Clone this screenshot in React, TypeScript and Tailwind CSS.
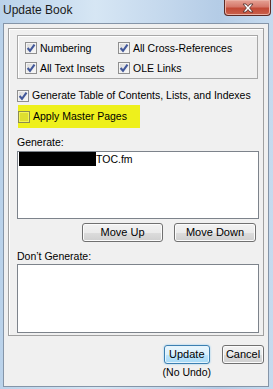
import React from "react"

function Check({ checked = false, tint = false }: { checked?: boolean; tint?: boolean }) {
  return (
    <span
      className={
        "w-[12px] h-[12px] shrink-0 border flex items-center justify-center " +
        (tint
          ? "border-[#8c8c50] bg-[#dede30] shadow-[inset_0_0_0_1px_#f4f45a]"
          : "border-[#8f8f8f] bg-[linear-gradient(135deg,#d6d6d6,#fbfbfb)] shadow-[inset_0_0_0_1px_#f4f4f4]")
      }
    >
      {checked && (
        <svg width="10" height="10" viewBox="0 0 10 10">
          <path d="M1.6 5 L4 7.8 L8.5 1.7" fill="none" stroke="#42589a" strokeWidth="2.1" strokeLinejoin="miter" />
        </svg>
      )}
    </span>
  )
}

function WinButton({ label, width, primary = false }: { label: string; width: string; primary?: boolean }) {
  return (
    <button
      className={
        "h-[19px] rounded-[3px] border text-[11px] leading-none text-black flex items-center justify-center " +
        width +
        " " +
        (primary
          ? "border-[#3c7fb1] bg-[linear-gradient(to_bottom,#eaf6fd_0%,#d9f0fc_50%,#bee6fd_50%,#a7d9f5_100%)] shadow-[inset_0_0_0_1px_#e6f4fc,0_0_2px_#7fc4ef]"
          : "border-[#707070] bg-[linear-gradient(to_bottom,#f2f2f2_0%,#ebebeb_50%,#dddddd_50%,#cfcfcf_100%)] shadow-[inset_0_0_0_1px_#fbfbfb]")
      }
    >
      {label}
    </button>
  )
}

export default function App() {
  return (
    <div
      className="w-[273px] h-[389px] overflow-hidden flex flex-col bg-[linear-gradient(to_right,#bad2ea,#d6e6f4_35%,#c4d8ed_60%,#b4cce6_80%,#c6dbef)] text-black"
      style={{ fontFamily: '"Liberation Sans", Arial, sans-serif' }}
    >
      {/* Title bar */}
      <div className="h-[23px] flex justify-between items-start shrink-0">
        <span className="pl-[3px] pt-[3px] text-[12px] leading-[14px] text-[#1b1b1b]">Update Book</span>
        <div className="mr-[2px] w-[47px] h-[16px] rounded-b-[4px] border border-t-0 border-[#5b2a24] bg-[linear-gradient(to_bottom,#e6a396_0%,#d5786a_45%,#c24a36_55%,#c9614c_100%)] shadow-[inset_0_0_0_1px_#eab1a5] flex items-center justify-center">
          <svg width="14" height="10" viewBox="0 0 14 10">
            <path
              d="M2 1 L5 1 L7 3.4 L9 1 L12 1 L8.6 5 L12 9 L9 9 L7 6.6 L5 9 L2 9 L5.4 5 Z"
              fill="#ffffff"
              stroke="#4a2a26"
              strokeWidth="0.8"
            />
          </svg>
        </div>
      </div>

      {/* Client area */}
      <div className="ml-[3px] mr-[4px] h-[364px] border border-[#8595a8] bg-[#f0f0f0] flex flex-col">
        <div className="ml-[4px] mt-[4px] w-[256px] border border-[#a0a0a0] shadow-[inset_1px_1px_0_#ffffff] pl-[8px] pt-[6px] pb-[2px] flex flex-col text-[10.5px] leading-none">
          {/* Update options */}
          <div className="w-[241px] h-[44px] border border-[#a8a8a8] shadow-[inset_1px_1px_0_#ffffff] pl-[7px] pt-[2px] flex flex-col">
            <div className="h-[20px] flex items-center">
              <div className="w-[93px] flex items-center gap-[3px]">
                <Check checked />
                <span>Numbering</span>
              </div>
              <div className="flex items-center gap-[3px]">
                <Check checked />
                <span>All Cross-References</span>
              </div>
            </div>
            <div className="h-[20px] flex items-center">
              <div className="w-[93px] flex items-center gap-[3px]">
                <Check checked />
                <span>All Text Insets</span>
              </div>
              <div className="flex items-center gap-[3px]">
                <Check checked />
                <span>OLE Links</span>
              </div>
            </div>
          </div>

          <div className="mt-[7px] h-[19px] flex items-center gap-[3px]">
            <Check checked />
            <span>Generate Table of Contents, Lists, and Indexes</span>
          </div>

          <div className="ml-[1px] w-[122px] h-[23px] bg-[#eef01c] flex items-center gap-[3px]">
            <Check tint />
            <span>Apply Master Pages</span>
          </div>

          <div className="mt-[7px] h-[14px] leading-[14px]">Generate:</div>
          <div className="mt-[2px] w-[242px] h-[68px] border border-[#7d838b] bg-white">
            <div className="h-[14px] flex items-center">
              <span className="ml-[1px] w-[77px] h-[14px] bg-black" />
              <span className="text-[10.5px]">TOC.fm</span>
            </div>
          </div>

          <div className="mt-[4px] w-[242px] pr-[3px] flex justify-end gap-[11px]">
            <WinButton label="Move Up" width="w-[81px]" />
            <WinButton label="Move Down" width="w-[82px]" />
          </div>

          <div className="mt-[7px] h-[14px] leading-[14px]">Don’t Generate:</div>
          <div className="mt-[1px] w-[242px] h-[69px] border border-[#7d838b] bg-white" />
        </div>

        {/* Dialog buttons */}
        <div className="ml-[4px] w-[256px] mt-[9px] flex justify-end items-start gap-[11px]">
          <div className="flex flex-col items-center">
            <WinButton label="Update" width="w-[46px]" primary />
            <span className="mt-[1px] h-[14px] leading-[14px] text-[10.5px]">(No Undo)</span>
          </div>
          <WinButton label="Cancel" width="w-[42px]" />
        </div>
      </div>
    </div>
  )
}
